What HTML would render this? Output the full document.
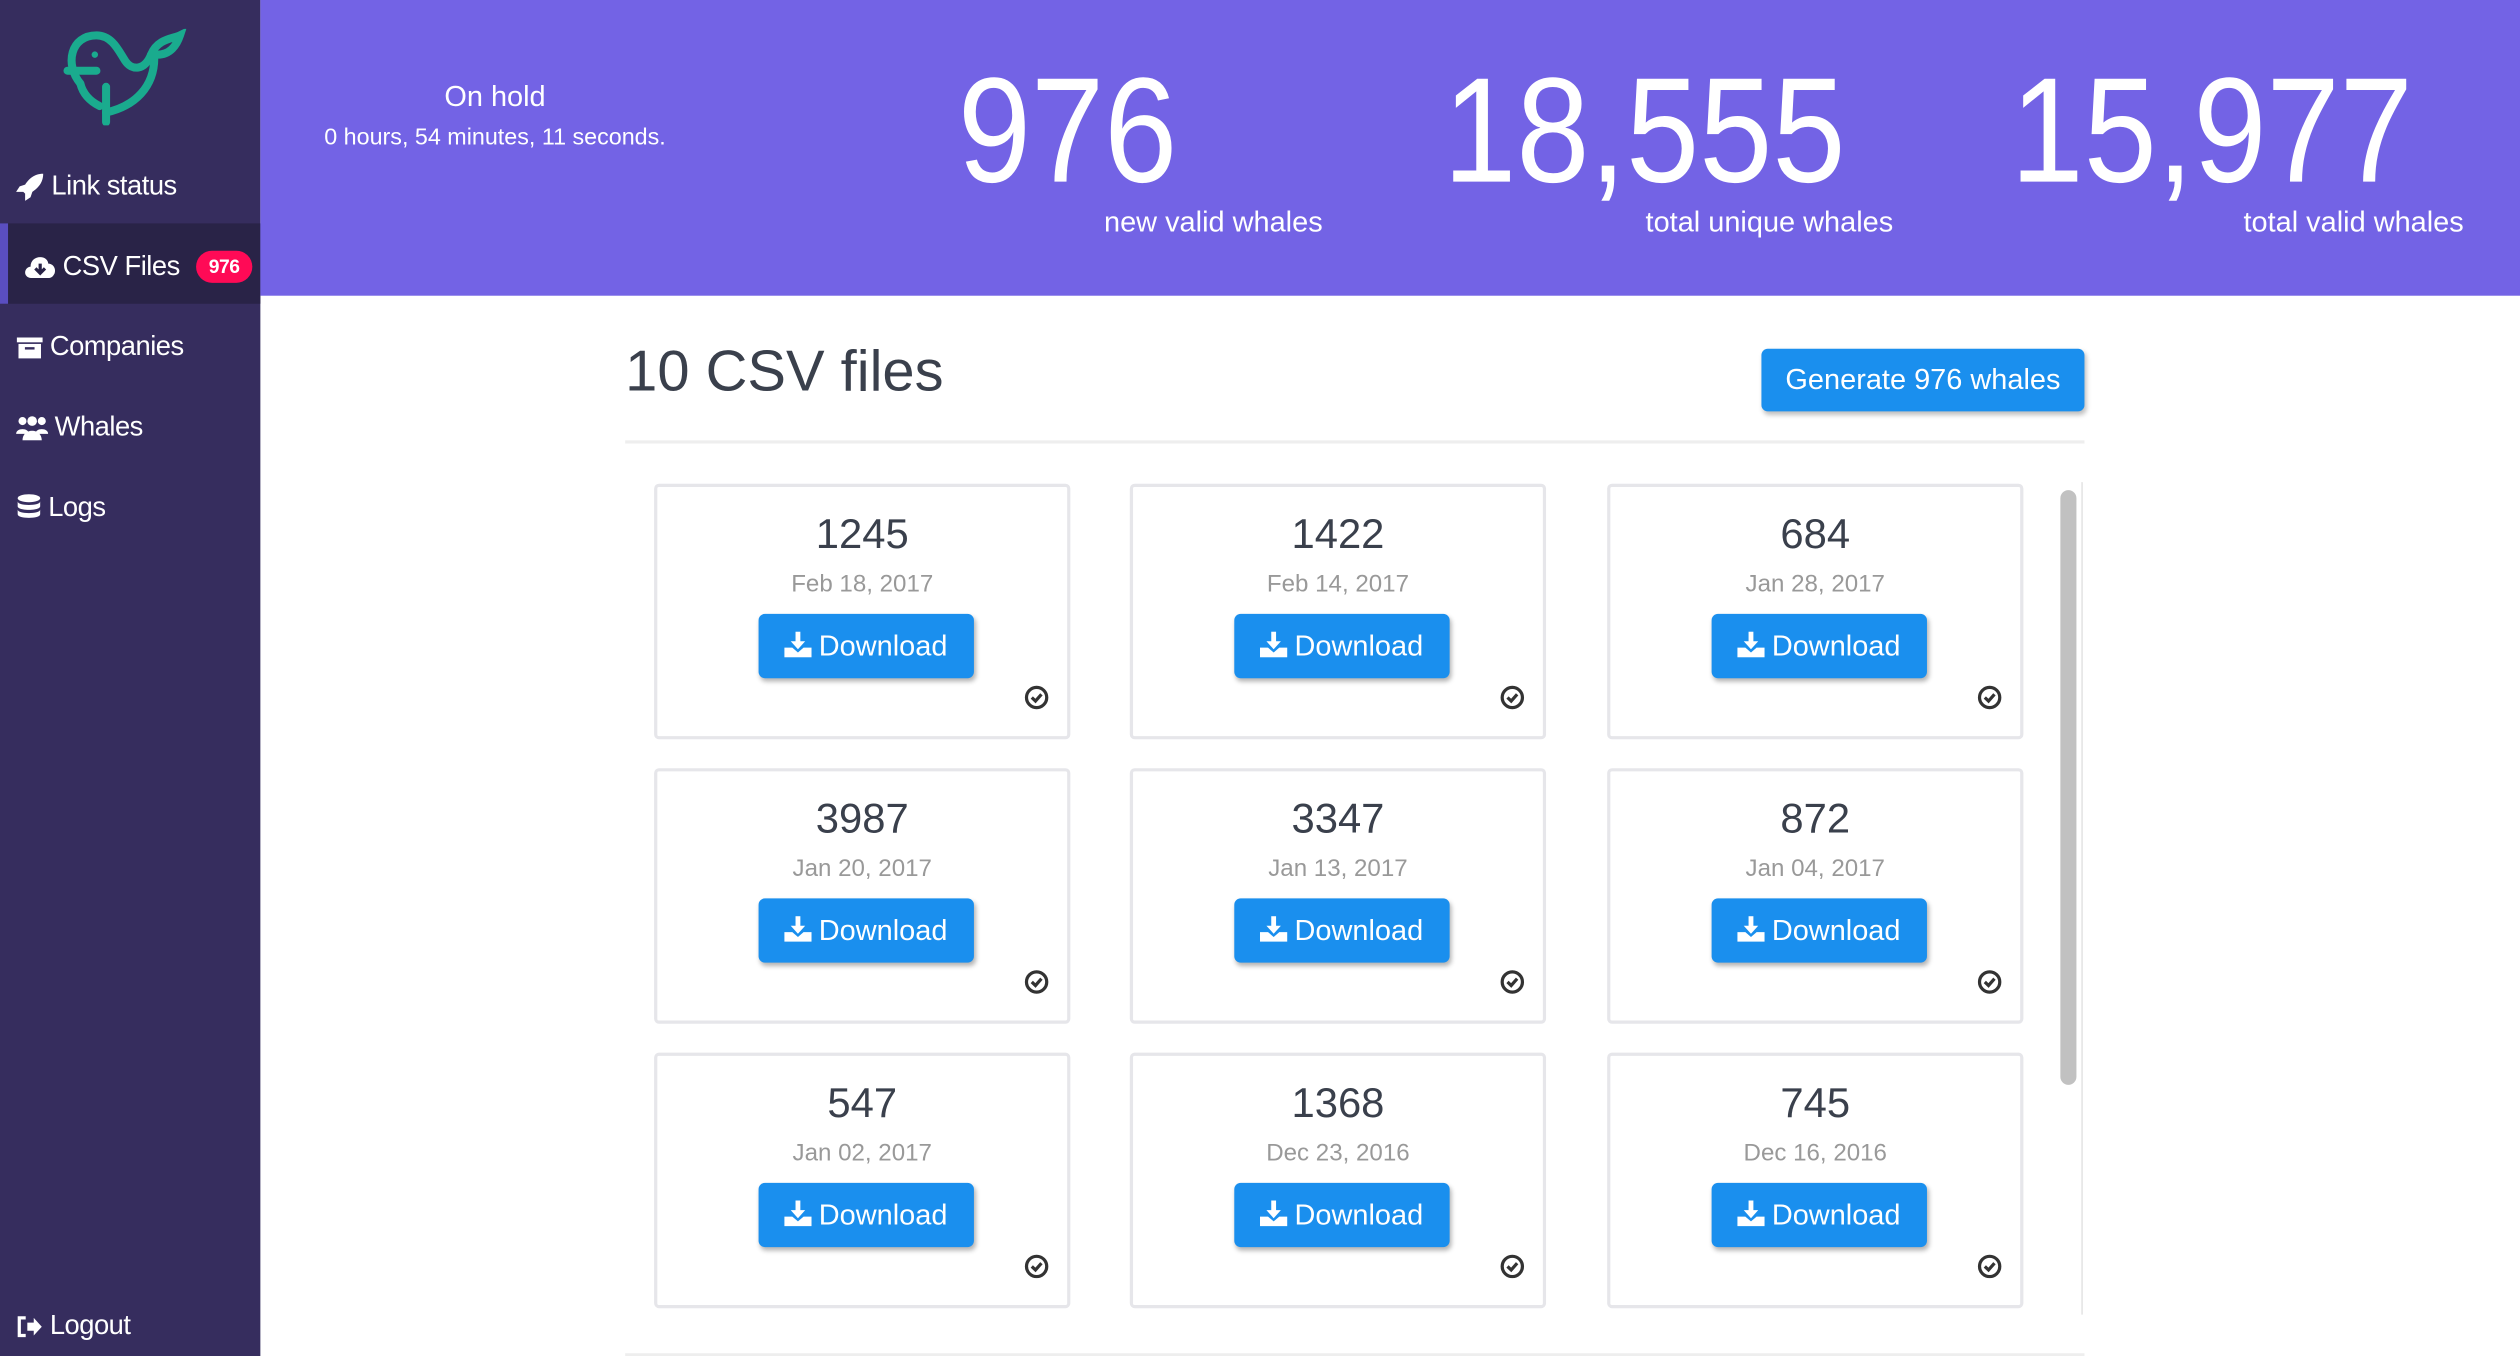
<!DOCTYPE html>
<html><head><meta charset="utf-8"><style>
*{margin:0;padding:0;box-sizing:border-box}
html,body{width:2520px;height:1356px;overflow:hidden;background:#fff}
#w{width:1568px;height:844px;transform:scale(1.60714);transform-origin:0 0;position:relative;font-family:"Liberation Sans",sans-serif}
.sb{position:absolute;left:0;top:0;width:162px;height:844px;background:#362d5e;color:#fff}
.it{position:absolute;left:10px;font-size:17px;font-weight:300;display:flex;align-items:center;gap:4px;letter-spacing:-0.3px}
.act{position:absolute;left:0;top:139px;width:162px;height:50px;background:#292347;border-left:5px solid #5a4ec0}
.badge{background:#ff0a56;border-radius:11px;font-size:12px;font-weight:bold;padding:3px 8px;margin-left:6px}
.hd{position:absolute;left:162px;top:0;width:1406px;height:184px;background:#7363e5;color:#fff}
.big{position:absolute;top:35px;font-size:93px;line-height:93px;font-weight:300;transform-origin:0 0;transform:scaleX(.88)}
.lbl{position:absolute;top:128px;font-size:18px;text-align:right}
h1{position:absolute;left:389px;top:210px;font-size:36px;font-weight:normal;color:#3a404c}
.gen{position:absolute;left:1096px;top:217px;width:201px;height:39px;background:#1a8fee;color:#fff;border-radius:4px;font-size:18px;text-align:center;line-height:39px;box-shadow:1px 2px 3px rgba(0,0,0,.25)}
.hr{position:absolute;left:389px;width:908px;height:2px;background:#eee}
.card{position:absolute;width:259px;height:159px;border:2px solid #e6e6ea;border-radius:3px;text-align:center}
.num{position:absolute;top:14px;width:100%;font-size:26px;color:#3a404c}
.dt{position:absolute;top:52px;width:100%;font-size:15px;color:#999}
.btn{position:absolute;left:63px;top:79px;width:134px;height:40px;background:#1a8fee;border-radius:4px;color:#fff;font-size:18px;line-height:40px;box-shadow:1px 2px 3px rgba(0,0,0,.3)}
.ck{position:absolute;left:228px;top:123px}
</style></head><body><div id="w">
<div class="sb">
<svg style="position:absolute;left:38px;top:18px" width="78" height="60" viewBox="0 0 78 60" fill="none" stroke="#1aab8e" stroke-width="5" stroke-linecap="round"><path d="M12 34 C2 22 6 4 22 4 C32 4 36 14 40 20 C44 26 52 26 56 16"/><path d="M56 16 C60 6 70 6 74 4 C72 10 68 16 60 16"/><path d="M58 18 C58 36 46 48 28 52"/><path d="M12 34 C14 42 20 46 24 48"/><path d="M28 36 L28 58"/><path d="M4 26 L22 26"/><circle cx="21" cy="16" r="2" fill="#1aab8e" stroke="none"/></svg>
<div class="it" style="top:106px"><svg width="18" height="18" viewBox="0 0 16 16"><path d="M15 1 C10 1 7 4 5 7 L2 8 0 11 4 11 5 12 5 16 8 14 9 11 C12 9 15 6 15 1Z" fill="#fff"/></svg>Link status</div>
<div class="act"></div>
<div class="it" style="top:156px;left:15px"><svg width="20" height="16" viewBox="0 0 20 16"><path d="M5 15 C1 15 0 12 1 10 C2 8 4 8 4 8 C4 4 7 2 10 2 C13 2 15 4 15 6 C18 6 20 9 19 12 C18 14 17 15 15 15Z" fill="#fff"/><path d="M10 6 V12 M7 9 L10 12 13 9" stroke="#292347" stroke-width="2" fill="none"/></svg>CSV Files<span class="badge">976</span></div>
<div class="it" style="top:206px"><svg width="17" height="16" viewBox="0 0 16 16"><rect x="0" y="2" width="16" height="3" fill="#fff"/><rect x="1" y="6" width="14" height="9" fill="#fff"/><rect x="5" y="8" width="6" height="1.5" fill="#362d5e"/></svg>Companies</div>
<div class="it" style="top:256px"><svg width="20" height="16" viewBox="0 0 20 16" fill="#fff"><circle cx="4" cy="4" r="2.5"/><circle cx="16" cy="4" r="2.5"/><circle cx="10" cy="4" r="3"/><path d="M0 12 C0 8 8 8 8 12Z M12 12 C12 8 20 8 20 12Z M4 16 C4 8 16 8 16 16Z"/></svg>Whales</div>
<div class="it" style="top:306px"><svg width="16" height="18" viewBox="0 0 16 18" fill="#fff"><ellipse cx="8" cy="3" rx="7" ry="2.5"/><path d="M1 5 C1 8 15 8 15 5 V8 C15 11 1 11 1 8Z M1 10 C1 13 15 13 15 10 V13 C15 16 1 16 1 13Z"/></svg>Logs</div>
<div class="it" style="top:815px"><svg width="17" height="15" viewBox="0 0 17 15"><path d="M6 2 H2 V13 H6" stroke="#fff" stroke-width="2" fill="none"/><path d="M7 5 H11 V2 L16 7.5 11 13 V10 H7Z" fill="#fff"/></svg>Logout</div>
</div>
<div class="hd">
<div style="position:absolute;left:0;width:292px;top:50px;text-align:center;font-size:18px">On hold</div>
<div style="position:absolute;left:0;width:292px;top:78px;text-align:center;font-size:14.5px">0 hours, 54 minutes, 11 seconds.</div>
<div class="big" style="left:434px">976</div>
<div class="big" style="left:736px">18,555</div>
<div class="big" style="left:1089px">15,977</div>
<div class="lbl" style="right:745px">new valid whales</div>
<div class="lbl" style="right:390px">total unique whales</div>
<div class="lbl" style="right:35px">total valid whales</div>
</div>
<h1>10 CSV files</h1>
<div class="gen">Generate 976 whales</div>
<div class="hr" style="top:274px"></div>
<div class="hr" style="top:842px"></div>
<div style="position:absolute;left:1295px;top:300px;width:1px;height:518px;background:#e5e5e5"></div>
<div style="position:absolute;left:1282px;top:305px;width:10px;height:370px;background:#c1c1c1;border-radius:5px"></div>
<div id="cards"></div>
</div>
<script>
var d=[["1245","Feb 18, 2017"],["1422","Feb 14, 2017"],["684","Jan 28, 2017"],["3987","Jan 20, 2017"],["3347","Jan 13, 2017"],["872","Jan 04, 2017"],["547","Jan 02, 2017"],["1368","Dec 23, 2016"],["745","Dec 16, 2016"]];
var xs=[407,703,1000],ys=[301,478,655],h="";
d.forEach(function(c,i){h+='<div class="card" style="left:'+xs[i%3]+'px;top:'+ys[Math.floor(i/3)]+'px"><div class="num">'+c[0]+'</div><div class="dt">'+c[1]+'</div><div class="btn"><svg width="17" height="16" viewBox="0 0 17 16" style="vertical-align:-1px;margin-right:4px"><path d="M7 0 H10 V6 H13 L8.5 11 4 6 H7Z" fill="#fff"/><path d="M0 10 H5 L8.5 13 12 10 H17 V16 H0Z" fill="#fff"/></svg>Download</div><svg class="ck" width="16" height="16" viewBox="0 0 16 16"><circle cx="8" cy="8" r="6.3" stroke="#333" stroke-width="2" fill="none"/><path d="M5 8 L7.3 10.2 11 6" stroke="#333" stroke-width="2" fill="none"/></svg></div>'});
document.getElementById("cards").innerHTML=h;
</script>
</body></html>
